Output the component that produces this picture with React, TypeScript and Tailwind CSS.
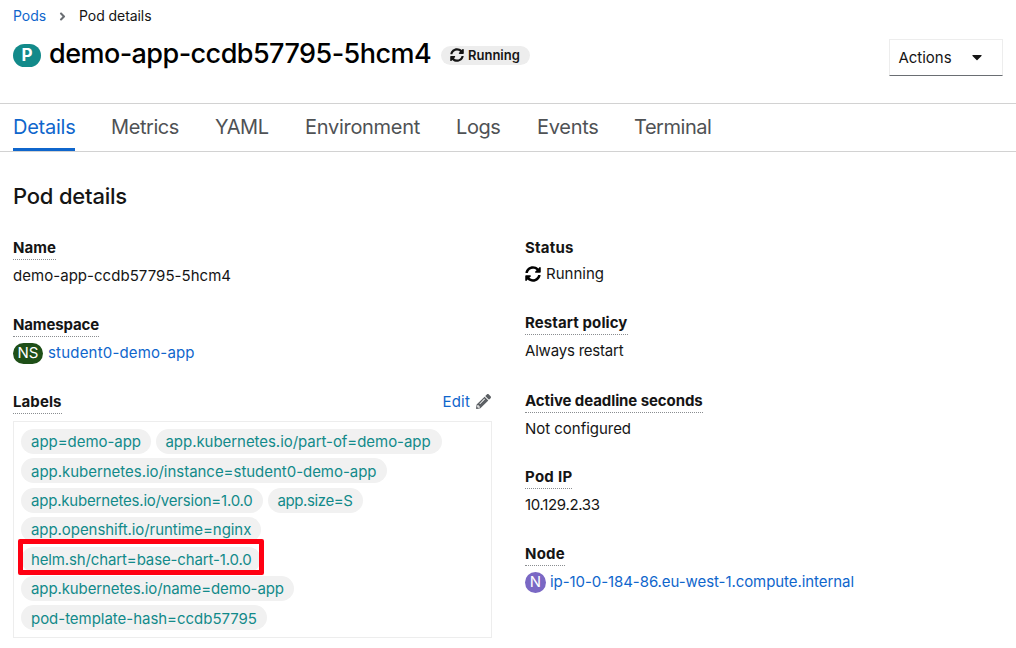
import type { ReactNode } from "react";
import { FaAngleRight, FaCaretDown, FaPencilAlt, FaSyncAlt } from "react-icons/fa";

const tabs = [
  { name: "Details", cls: "w-[62px] mr-[36px] tracking-[-0.24px]", active: true },
  { name: "Metrics", cls: "w-[68px] mr-[36px] tracking-[-0.42px]" },
  { name: "YAML", cls: "w-[54px] mr-[36px] tracking-[-0.44px]" },
  { name: "Environment", cls: "w-[115px] mr-[36px] tracking-[-0.29px]" },
  { name: "Logs", cls: "w-[44px] mr-[37px] tracking-[-0.41px]" },
  { name: "Events", cls: "w-[62px] mr-[35px] tracking-[-0.29px]" },
  { name: "Terminal", cls: "w-[77px] tracking-[-0.45px]" },
];

const labelRows = [
  [
    { text: "app=demo-app", cls: "w-[130px] tracking-[-0.04px]" },
    { text: "app.kubernetes.io/part-of=demo-app", cls: "w-[286px] tracking-[-0.05px]" },
  ],
  [{ text: "app.kubernetes.io/instance=student0-demo-app", cls: "w-[366px] tracking-[-0.03px]" }],
  [
    { text: "app.kubernetes.io/version=1.0.0", cls: "w-[242px] tracking-[-0.2px]" },
    { text: "app.size=S", cls: "w-[95px] tracking-[-0.4px]" },
  ],
  [{ text: "app.openshift.io/runtime=nginx", cls: "w-[240px] tracking-[-0.06px]" }],
  [{ text: "helm.sh/chart=base-chart-1.0.0", cls: "w-[240px] tracking-[-0.13px]", marked: true }],
  [{ text: "app.kubernetes.io/name=demo-app", cls: "w-[273px] tracking-[-0.11px]" }],
  [{ text: "pod-template-hash=ccdb57795", cls: "w-[246px] tracking-[-0.03px]" }],
];

function Term({ children, cls, plain }: { children: ReactNode; cls: string; plain?: boolean }) {
  return (
    <dt className="flex h-[21px]">
      <span
        className={`h-[22px] whitespace-nowrap font-bold leading-5 text-[#151515] ${
          plain ? "" : "border-b border-dotted border-[#8a8d90]"
        } ${cls}`}
      >
        {children}
      </span>
    </dt>
  );
}

export default function App() {
  return (
    <div className="h-[648px] w-[1016px] overflow-hidden bg-white font-['Inter','Liberation_Sans',sans-serif] text-[15px] text-[#151515]">
      <header className="h-[103px] px-[13px] pt-1.5">
        <nav className="flex h-5 items-center text-sm leading-5">
          <a className="w-[33px] tracking-[-0.06px] text-[#0f66cc]">Pods</a>
          <FaAngleRight className="ml-2.5 mr-2.5 size-[13px] text-[#6a6e73]" />
          <span className="tracking-[-0.06px]">Pod details</span>
        </nav>
        <div className="flex justify-between">
          <div className="flex h-[46px] items-center pt-[11px]">
            <span className="mt-0.5 flex h-[23px] w-7 items-center justify-center rounded-full bg-[#128a8a] text-[17px] font-bold leading-none text-white">
              P
            </span>
            <h1 className="-mt-0.5 ml-2 w-[382px] whitespace-nowrap text-[27px] font-medium leading-8 tracking-[-0.55px] text-black">
              demo-app-ccdb57795-5hcm4
            </h1>
            <span className="ml-2.5 mt-px flex h-[19px] w-[89px] items-center rounded-full bg-[#ededed] pl-[9px] text-[13px] font-semibold leading-none">
              <FaSyncAlt className="mr-1 size-[14px]" />
              Running
            </span>
          </div>
          <button className="mt-[13px] flex h-[37px] w-[114px] items-center border border-[#ededed] border-b-[#6a6e73] pl-[7.5px] pt-px">
            <span className="w-[55px]">Actions</span>
            <FaCaretDown className="-mt-0.5 ml-4 size-4" />
          </button>
        </div>
      </header>

      <nav className="flex h-[49px] border-y border-[#d2d2d2] px-[13px] text-xl">
        {tabs.map((t) => (
          <a
            key={t.name}
            className={`-mb-px h-[47px] whitespace-nowrap pt-[9px] leading-7 ${
              t.active ? "border-b-[3px] border-[#0f66cc] text-[#0f66cc]" : "text-[#4f5255]"
            } ${t.cls}`}
          >
            {t.name}
          </a>
        ))}
      </nav>

      <main className="px-[13px] pt-7">
        <h2 className="h-[58px] text-[22px] font-medium leading-8 tracking-[-0.21px]">Pod details</h2>
        <div className="flex">
          <dl className="w-[512px]">
            <Term cls="tracking-[0.06px]">Name</Term>
            <dd className="mb-[29px] mt-[7px] leading-5 tracking-[0.04px]">demo-app-ccdb57795-5hcm4</dd>
            <Term cls="tracking-[-0.14px]">Namespace</Term>
            <dd className="mb-[29px] mt-[7px] flex h-5 items-center">
              <span className="flex h-[21px] w-[30px] items-center justify-center rounded-full bg-[#1e4f18] text-[15px] text-white">
                NS
              </span>
              <a className="ml-[5px] tracking-[0.19px] text-[#0f66cc]">student0-demo-app</a>
            </dd>
            <div className="flex w-[479px] justify-between">
              <Term cls="tracking-[0.08px]">Labels</Term>
              <a className="flex h-5 items-center text-[#0f66cc]">
                <span className="tracking-[0.2px]">Edit</span>
                <FaPencilAlt className="ml-1.5 mr-px size-[15px] -translate-y-px text-[#5c6064]" />
              </a>
            </div>
            <dd className="mt-2 flex h-[217px] w-[479px] flex-col gap-[4.4px] border border-[#ededed] pl-[7px] pt-[7px]">
              {labelRows.map((row, i) => (
                <div key={i} className="flex gap-[4.5px]">
                  {row.map((l) => (
                    <span
                      key={l.text}
                      className={`relative flex h-[25px] items-center whitespace-nowrap rounded-full bg-[#f1f1f1] pl-2.5 pt-[2px] text-[#128a8a] ${l.cls}`}
                    >
                      {l.text}
                      {"marked" in l && (
                        <span className="absolute -left-[3px] -top-[7.4px] h-[36px] w-[246px] rounded-[2px] border-[5px] border-[#ff0012]" />
                      )}
                    </span>
                  ))}
                </div>
              ))}
            </dd>
          </dl>

          <dl>
            <Term plain cls="tracking-[0.2px]">Status</Term>
            <dd className="mb-[29px] mt-[5px] flex h-5 items-center">
              <FaSyncAlt className="mr-[5px] size-4 text-black" />
              Running
            </dd>
            <Term cls="tracking-[0.1px]">Restart policy</Term>
            <dd className="mb-[30px] mt-[7px] leading-5 tracking-[-0.2px]">Always restart</dd>
            <Term cls="tracking-[-0.09px]">Active deadline seconds</Term>
            <dd className="mb-7 mt-[7px] leading-5 tracking-[-0.03px]">Not configured</dd>
            <Term cls="tracking-[0.29px]">Pod IP</Term>
            <dd className="mb-[29px] mt-[7px] leading-5 tracking-[-0.33px]">10.129.2.33</dd>
            <Term cls="tracking-[0.24px]">Node</Term>
            <dd className="mt-[7px] flex h-5 items-center">
              <span className="flex size-[21px] items-center justify-center rounded-full bg-[#7a68c4] text-[15px] text-white">
                N
              </span>
              <a className="ml-1 whitespace-nowrap tracking-[-0.07px] text-[#0f66cc]">
                ip-10-0-184-86.eu-west-1.compute.internal
              </a>
            </dd>
          </dl>
        </div>
      </main>
    </div>
  );
}
